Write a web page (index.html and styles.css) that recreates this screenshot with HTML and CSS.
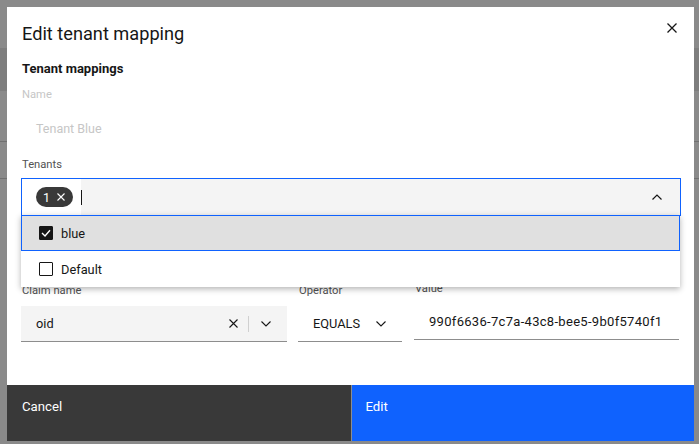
FILE: index.html
```html
<!DOCTYPE html>
<html>
<head>
<meta charset="utf-8">
<link rel="stylesheet" href="styles.css">
</head>
<body>
<div class="modal">
  <div class="content">
    <h1 class="title">Edit tenant mapping</h1>
    <button class="close" aria-label="Close">
      <svg width="10" height="10" viewBox="0 0 10 10"><path d="M0.5 0.5 L9.5 9.5 M9.5 0.5 L0.5 9.5" stroke="#161616" stroke-width="1.3" fill="none"/></svg>
    </button>
    <div class="section">Tenant mappings</div>
    <div class="label label-disabled">Name</div>
    <div class="field-disabled">Tenant Blue</div>
    <div class="label label-tenants">Tenants</div>
    <div class="combo-wrap">
      <div class="combo">
        <div class="combo-tags">
          <span class="tag"><span class="tag-num">1</span>
            <svg width="8" height="8" viewBox="0 0 8 8"><path d="M0.5 0.5 L7.5 7.5 M7.5 0.5 L0.5 7.5" stroke="#ffffff" stroke-width="1.1" fill="none"/></svg>
          </span>
        </div>
        <div class="combo-input">
          <span class="cursor"></span>
          <svg class="chev" width="10" height="6" viewBox="0 0 10 6"><path d="M0.5 5.5 L5 1 L9.5 5.5" stroke="#161616" stroke-width="1.2" fill="none"/></svg>
        </div>
      </div>
      <div class="menu">
        <div class="item item-active">
          <span class="cb cb-checked">
            <svg width="10" height="8" viewBox="0 0 10 8"><path d="M1 4 L4 7 L9 1.2" stroke="#ffffff" stroke-width="1.4" fill="none"/></svg>
          </span>
          <span class="item-text">blue</span>
        </div>
        <div class="item">
          <span class="cb"></span>
          <span class="item-text">Default</span>
        </div>
      </div>
    </div>
    <div class="claim-row">
      <div class="col col-claim">
        <div class="label">Claim name</div>
        <div class="field field-gray">
          <span class="val">oid</span>
          <span class="field-icons">
            <svg width="9" height="9" viewBox="0 0 9 9"><path d="M0.5 0.5 L8.5 8.5 M8.5 0.5 L0.5 8.5" stroke="#161616" stroke-width="1.1" fill="none"/></svg>
            <span class="sep"></span>
            <svg width="10" height="6" viewBox="0 0 10 6"><path d="M0.5 0.5 L5 5 L9.5 0.5" stroke="#161616" stroke-width="1.1" fill="none"/></svg>
          </span>
        </div>
      </div>
      <div class="col col-op">
        <div class="label">Operator</div>
        <div class="field field-white">
          <span class="val">EQUALS</span>
          <svg width="10" height="6" viewBox="0 0 10 6"><path d="M0.5 0.5 L5 5 L9.5 0.5" stroke="#161616" stroke-width="1.1" fill="none"/></svg>
        </div>
      </div>
      <div class="col col-val">
        <div class="label label-val">Value</div>
        <div class="field field-white field-value">
          <span class="val">990f6636-7c7a-43c8-bee5-9b0f5740f1</span>
        </div>
      </div>
    </div>
  </div>
  <div class="footer">
    <button class="btn btn-secondary">Cancel</button>
    <button class="btn btn-primary">Edit</button>
  </div>
</div>
</body>
</html>
```
FILE: styles.css
```css
* { box-sizing: border-box; }
html, body { margin: 0; padding: 0; }
body {
  width: 699px;
  height: 444px;
  overflow: hidden;
  font-family: Roboto, "Liberation Sans", sans-serif;
  color: #161616;
  background:
    linear-gradient(to bottom,
      #8a8a8a 0, #8a8a8a 48px,
      #7e7e7e 48px, #7e7e7e 91px,
      #8a8a8a 91px, #8a8a8a 141px,
      #707070 141px, #707070 142px,
      #8a8a8a 142px, #8a8a8a 178px,
      #707070 178px, #707070 179px,
      #8a8a8a 179px);
  padding: 7px 0 0 7px;
}
.modal {
  width: 687px;
  height: 434px;
  background: #ffffff;
  display: flex;
  flex-direction: column;
  position: relative;
}
.content {
  padding: 15px 13px 0 14px;
  flex: 1;
  position: relative;
}
.title {
  margin: 0 0 0 1px;
  font-size: 18.2px;
  font-weight: 400;
  line-height: 24px;
  color: #161616;
}
.close {
  position: absolute;
  top: 16px;
  right: 17px;
  width: 10px;
  height: 10px;
  padding: 0;
  border: 0;
  background: transparent;
  display: flex;
}
.section {
  margin: 14px 0 0 1px;
  font-size: 13px;
  font-weight: 700;
  line-height: 18px;
}
.label {
  font-size: 11.2px;
  line-height: 16px;
  color: #525252;
  margin-left: 1px;
}
.label-disabled {
  margin-top: 9px;
  color: #c6c6c6;
}
.field-disabled {
  height: 40px;
  margin-top: 5px;
  padding-left: 15px;
  display: flex;
  align-items: center;
  font-size: 12.5px;
  color: #c6c6c6;
}
.label-tenants {
  margin-top: 9px;
}
.combo-wrap {
  margin-top: 5px;
  position: relative;
}
.combo {
  height: 38px;
  border: 1px solid #0f62fe;
  display: flex;
}
.combo-tags {
  width: 59px;
  background: #ffffff;
  padding-left: 14px;
  display: flex;
  align-items: center;
}
.tag {
  height: 20px;
  width: 37px;
  border-radius: 10px;
  background: #393939;
  color: #ffffff;
  display: flex;
  align-items: center;
  padding-left: 7px;
  gap: 7px;
  font-size: 12.5px;
}
.combo-input {
  flex: 1;
  background: #f4f4f4;
  display: flex;
  align-items: center;
  justify-content: space-between;
  padding-right: 18px;
}
.cursor {
  width: 1px;
  height: 15px;
  background: #161616;
}
.menu {
  position: absolute;
  left: 0;
  top: 37px;
  width: 659px;
  background: #ffffff;
  box-shadow: 0 2px 6px rgba(0, 0, 0, 0.3);
  z-index: 2;
}
.item {
  height: 36px;
  display: flex;
  align-items: center;
  padding-left: 18px;
  gap: 8px;
  font-size: 12.8px;
  color: #161616;
  border: 1px solid transparent;
  border-left-width: 0;
}
.item-active {
  background: #e0e0e0;
  border: 1px solid #0f62fe;
  padding-left: 17px;
}
.cb {
  width: 14px;
  height: 14px;
  border: 1px solid #161616;
  border-radius: 1px;
  display: flex;
  align-items: center;
  justify-content: center;
}
.cb-checked {
  background: #161616;
}
.claim-row {
  margin-top: 67px;
  display: flex;
  gap: 11px;
}
.col-claim { width: 266px; }
.col-op { width: 104px; }
.col-val { width: 265px; margin-left: 1px; }
.label-val { margin-top: -2px; margin-bottom: 2px; }
.col .label { margin-bottom: 7px; }
.field {
  height: 36px;
  border-bottom: 1px solid #8d8d8d;
  display: flex;
  align-items: center;
  justify-content: space-between;
  padding: 0 16px 0 15px;
  font-size: 12.8px;
}
.field-gray { background: #f4f4f4; }
.field-white { background: #ffffff; }
.field-value {
  font-size: 13px;
  letter-spacing: 0.3px;
  padding: 0 0 0 15px;
  white-space: nowrap;
  overflow: hidden;
}
.field-icons {
  display: flex;
  align-items: center;
  gap: 9px;
}
.sep {
  width: 1px;
  height: 16px;
  background: #d0d0d0;
  margin: 0 3px 0 1px;
}
.footer {
  height: 56px;
  display: flex;
}
.btn {
  flex: 1;
  border: 0;
  margin: 0;
  text-align: left;
  padding: 13px 15px 0 15px;
  font-family: Roboto, "Liberation Sans", sans-serif;
  font-size: 13.2px;
  line-height: 18px;
  color: #ffffff;
  display: flex;
  align-items: flex-start;
  justify-content: flex-start;
}
.btn-secondary {
  background: #393939;
  border-right: 1px solid #8d8d8d;
}
.btn-primary {
  background: #0f62fe;
  padding-left: 14px;
}
```
